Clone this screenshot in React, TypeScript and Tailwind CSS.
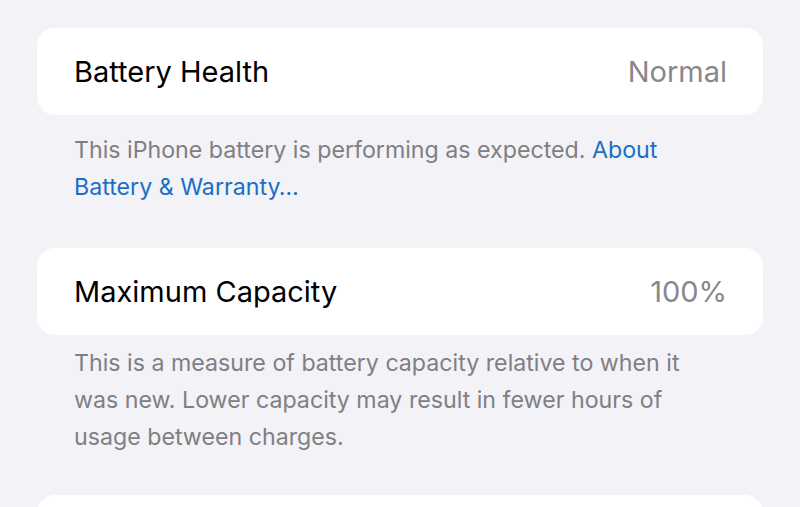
import * as React from "react";

const font = { fontFamily: "Inter, 'Noto Sans', sans-serif" };

function Row({ label, value }: { label: string; value: string }) {
  return (
    <div className="flex h-[87px] items-center justify-between rounded-[18px] bg-white pl-[37px] pr-[36px]">
      <span className="text-[29px] text-black">{label}</span>
      <span className="text-[29px] text-[#88888c]">{value}</span>
    </div>
  );
}

export default function App() {
  return (
    <div className="h-[507px] w-[800px] overflow-hidden bg-[#f2f2f7]" style={font}>
      <div className="px-[37px] pt-[28px]">
        <Row label="Battery Health" value="Normal" />
        <p className="mt-[17px] px-[37px] text-[23.2px] leading-[37px] text-[#7f7f84]">
          This iPhone battery is performing as expected.{" "}
          <span className="text-[#1a6fc4]">About Battery &amp; Warranty…</span>
        </p>

        <div className="mt-[42px]">
          <Row label="Maximum Capacity" value="100%" />
        </div>
        <p className="mt-[10px] pl-[37px] pr-[70px] text-[23.2px] leading-[37px] text-[#7f7f84]">
          This is a measure of battery capacity relative to when it was new. Lower capacity may result in fewer hours of usage between charges.
        </p>

        <div className="mt-[39px] h-[87px] rounded-[18px] bg-white" />
      </div>
    </div>
  );
}
